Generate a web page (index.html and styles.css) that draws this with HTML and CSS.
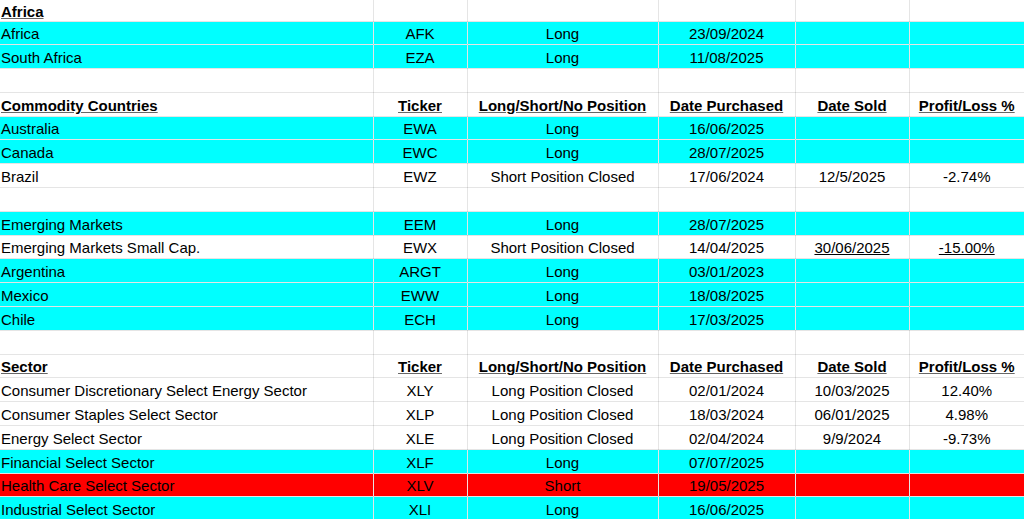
FILE: index.html
```html
<!DOCTYPE html>
<html>
<head>
<meta charset="utf-8">
<link rel="stylesheet" href="styles.css">
</head>
<body>
<table class="sheet">
  <colgroup>
    <col class="c-name"><col class="c-ticker"><col class="c-pos"><col class="c-buy"><col class="c-sold"><col class="c-pl">
  </colgroup>
  <tbody>
    <tr class="first"><td class="h">Africa</td><td></td><td></td><td></td><td></td><td></td></tr>
    <tr class="cyan"><td>Africa</td><td>AFK</td><td>Long</td><td>23/09/2024</td><td></td><td></td></tr>
    <tr class="cyan"><td>South Africa</td><td>EZA</td><td>Long</td><td>11/08/2025</td><td></td><td></td></tr>
    <tr><td></td><td></td><td></td><td></td><td></td><td></td></tr>
    <tr class="head"><td>Commodity Countries</td><td>Ticker</td><td>Long/Short/No Position</td><td>Date Purchased</td><td>Date Sold</td><td>Profit/Loss %</td></tr>
    <tr class="cyan"><td>Australia</td><td>EWA</td><td>Long</td><td>16/06/2025</td><td></td><td></td></tr>
    <tr class="cyan"><td>Canada</td><td>EWC</td><td>Long</td><td>28/07/2025</td><td></td><td></td></tr>
    <tr><td>Brazil</td><td>EWZ</td><td>Short Position Closed</td><td>17/06/2024</td><td>12/5/2025</td><td>-2.74%</td></tr>
    <tr><td></td><td></td><td></td><td></td><td></td><td></td></tr>
    <tr class="cyan"><td>Emerging Markets</td><td>EEM</td><td>Long</td><td>28/07/2025</td><td></td><td></td></tr>
    <tr><td>Emerging Markets Small Cap.</td><td>EWX</td><td>Short Position Closed</td><td>14/04/2025</td><td><span class="u">30/06/2025</span></td><td><span class="u">-15.00%</span></td></tr>
    <tr class="cyan"><td>Argentina</td><td>ARGT</td><td>Long</td><td>03/01/2023</td><td></td><td></td></tr>
    <tr class="cyan"><td>Mexico</td><td>EWW</td><td>Long</td><td>18/08/2025</td><td></td><td></td></tr>
    <tr class="cyan"><td>Chile</td><td>ECH</td><td>Long</td><td>17/03/2025</td><td></td><td></td></tr>
    <tr><td></td><td></td><td></td><td></td><td></td><td></td></tr>
    <tr class="head"><td>Sector</td><td>Ticker</td><td>Long/Short/No Position</td><td>Date Purchased</td><td>Date Sold</td><td>Profit/Loss %</td></tr>
    <tr><td>Consumer Discretionary Select Energy Sector</td><td>XLY</td><td>Long Position Closed</td><td>02/01/2024</td><td>10/03/2025</td><td>12.40%</td></tr>
    <tr><td>Consumer Staples Select Sector</td><td>XLP</td><td>Long Position Closed</td><td>18/03/2024</td><td>06/01/2025</td><td>4.98%</td></tr>
    <tr><td>Energy Select Sector</td><td>XLE</td><td>Long Position Closed</td><td>02/04/2024</td><td>9/9/2024</td><td>-9.73%</td></tr>
    <tr class="cyan"><td>Financial Select Sector</td><td>XLF</td><td>Long</td><td>07/07/2025</td><td></td><td></td></tr>
    <tr class="red"><td>Health Care Select Sector</td><td>XLV</td><td>Short</td><td>19/05/2025</td><td></td><td></td></tr>
    <tr class="cyan"><td>Industrial Select Sector</td><td>XLI</td><td>Long</td><td>16/06/2025</td><td></td><td></td></tr>
  </tbody>
</table>
</body>
</html>
```

FILE: styles.css
```css
html, body {
  margin: 0;
  padding: 0;
  background: #ffffff;
  overflow: hidden;
}

.sheet {
  width: 1024px;
  table-layout: fixed;
  border-collapse: collapse;
  font-family: "Liberation Sans", Arial, sans-serif;
  font-size: 15px;
  color: #000;
}

.c-name { width: 373px; }
.c-ticker { width: 94px; }
.c-pos { width: 191px; }
.c-buy { width: 137px; }
.c-sold { width: 114px; }
.c-pl { width: 115px; }

.sheet tr {
  height: 23.8px;
}

.sheet tr.first {
  height: 21px;
}

.sheet td {
  border: 1px solid rgba(0, 0, 0, 0.1);
  padding: 0 2px 2px 2px;
  vertical-align: bottom;
  text-align: center;
  white-space: nowrap;
  overflow: hidden;
  line-height: 17px;
}

.sheet td:first-child {
  text-align: left;
  border-left: none;
  padding-left: 1px;
}

.sheet td:last-child {
  border-right: none;
}

.sheet tr.first td {
  border-top: none;
  padding-bottom: 1px;
}

.cyan {
  background: #00ffff;
}

.red {
  background: #ff0000;
}

.head td,
td.h {
  font-weight: bold;
  text-decoration: underline;
  text-decoration-color: #666;
}

.u {
  text-decoration: underline;
}
```
